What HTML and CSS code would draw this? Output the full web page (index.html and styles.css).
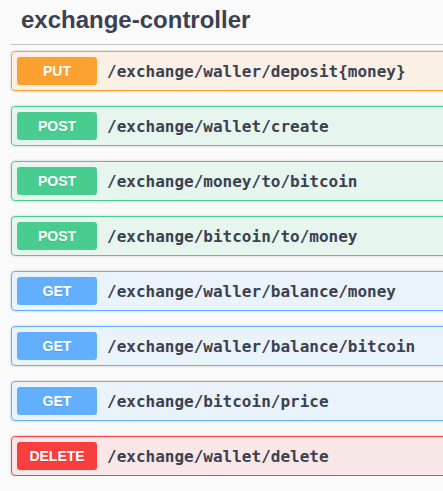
FILE: index.html
```html
<!DOCTYPE html>
<html lang="en">
<head>
<meta charset="utf-8">
<title>exchange-controller</title>
<link rel="stylesheet" href="styles.css">
</head>
<body>
<div class="section">
  <h3 class="tag">exchange-controller</h3>
  <div class="ops">
    <div class="opblock put"><span class="method">PUT</span><span class="path">/exchange/waller/deposit{money}</span></div>
    <div class="opblock post"><span class="method">POST</span><span class="path">/exchange/wallet/create</span></div>
    <div class="opblock post"><span class="method">POST</span><span class="path">/exchange/money/to/bitcoin</span></div>
    <div class="opblock post"><span class="method">POST</span><span class="path">/exchange/bitcoin/to/money</span></div>
    <div class="opblock get"><span class="method">GET</span><span class="path">/exchange/waller/balance/money</span></div>
    <div class="opblock get"><span class="method">GET</span><span class="path">/exchange/waller/balance/bitcoin</span></div>
    <div class="opblock get"><span class="method">GET</span><span class="path">/exchange/bitcoin/price</span></div>
    <div class="opblock delete"><span class="method">DELETE</span><span class="path">/exchange/wallet/delete</span></div>
  </div>
</div>
</body>
</html>
```
FILE: styles.css
```css
html, body {
  margin: 0;
  padding: 0;
  background: #fafafa;
  overflow: hidden;
}
.section {
  width: 620px;
  padding-left: 11px;
}
.tag {
  margin: 0 0 6px 0;
  padding: 6px 20px 10px 10px;
  font-family: "Liberation Sans", Arial, sans-serif;
  font-size: 24px;
  line-height: 28px;
  font-weight: 700;
  color: #3b4151;
  border-bottom: 1px solid rgba(59, 65, 81, 0.3);
}
.ops {
  display: flex;
  flex-direction: column;
  gap: 15px;
}
.opblock {
  display: flex;
  align-items: center;
  padding: 5px;
  border: 1px solid;
  border-radius: 4px;
  box-shadow: 0 0 3px rgba(0, 0, 0, 0.19);
}
.method {
  min-width: 80px;
  padding: 6px 0;
  box-sizing: border-box;
  text-align: center;
  border-radius: 3px;
  font-family: "Liberation Sans", Arial, sans-serif;
  font-size: 14px;
  line-height: 16px;
  font-weight: 700;
  color: #fff;
  text-shadow: 0 1px 0 rgba(0, 0, 0, 0.1);
}
.path {
  padding: 0 10px;
  font-family: "DejaVu Sans Mono", monospace;
  font-size: 16px;
  font-weight: 700;
  color: #3b4151;
}
.put { border-color: #fca130; background: rgba(252, 161, 48, 0.1); }
.put .method { background: #fca130; }
.post { border-color: #49cc90; background: rgba(73, 204, 144, 0.1); }
.post .method { background: #49cc90; }
.get { border-color: #61affe; background: rgba(97, 175, 254, 0.1); }
.get .method { background: #61affe; }
.delete { border-color: #f93e3e; background: rgba(249, 62, 62, 0.1); }
.delete .method { background: #f93e3e; }
```
